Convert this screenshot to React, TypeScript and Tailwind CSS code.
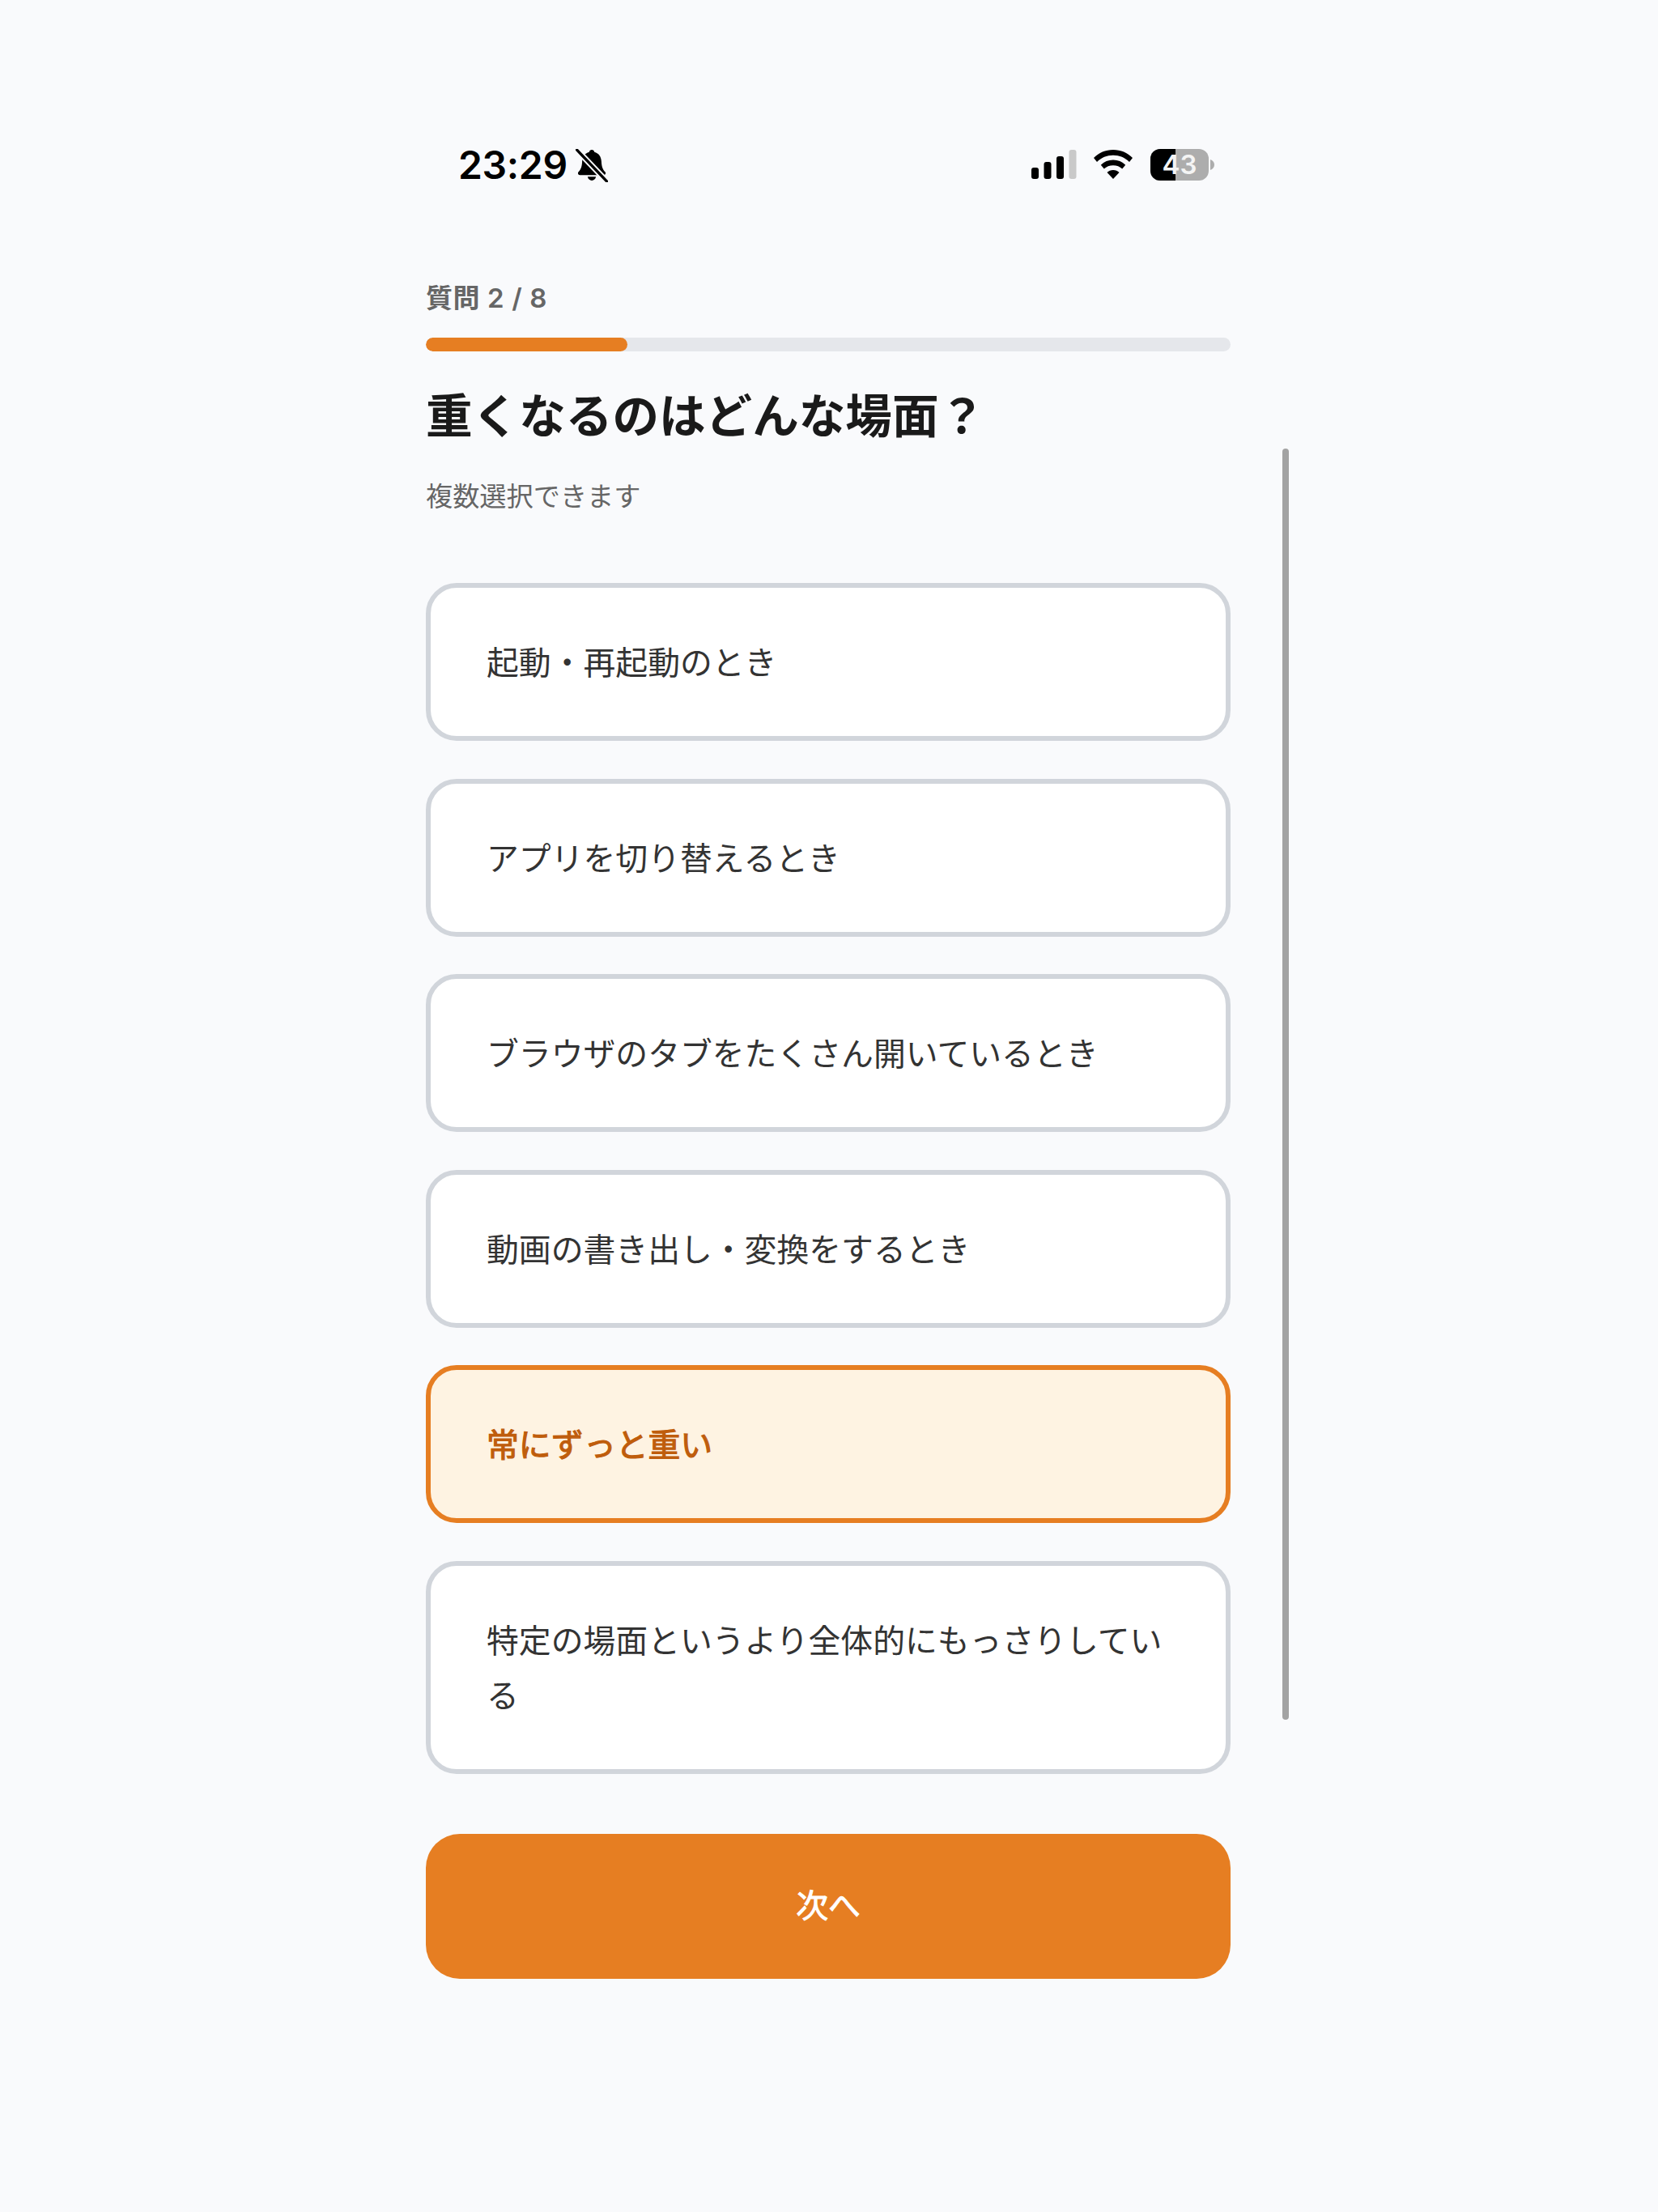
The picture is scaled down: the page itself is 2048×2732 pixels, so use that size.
const options = [
  "起動・再起動のとき",
  "アプリを切り替えるとき",
  "ブラウザのタブをたくさん開いているとき",
  "動画の書き出し・変換をするとき",
  "常にずっと重い",
  "特定の場面というより全体的にもっさりしている",
];

function BellSlash() {
  return (
    <svg width="40" height="41" viewBox="0 0 38 40" className="ml-[10px]">
      <path
        d="M19 1c1.600 0 2.800 1.100 3.100 2.600C27.600 5 30.300 9.400 30.600 15c.3 5.400 1 8.800 4.400 12.600 1.300 1.500.6 3.800-1.600 3.800H4.600c-2.200 0-2.900-2.300-1.600-3.800C6.400 23.800 7.100 20.400 7.400 15 7.700 9.400 10.400 5 15.900 3.600 16.200 2.100 17.400 1 19 1z"
        fill="#000"
      />
      <path d="M14 33.500h10c-.4 2.700-2.500 4.500-5 4.500s-4.600-1.800-5-4.500z" fill="#000" />
      <path d="M0 0L38 40" stroke="#f9fafc" strokeWidth="7" />
      <path d="M1 1L37 39" stroke="#000" strokeWidth="3.200" strokeLinecap="round" />
    </svg>
  );
}

function Signal() {
  return (
    <svg width="56" height="36" viewBox="0 0 56 36">
      <rect x="0" y="22" width="9" height="14" rx="3" fill="#000" />
      <rect x="15.500" y="15" width="9" height="21" rx="3" fill="#000" />
      <rect x="31" y="8" width="9" height="28" rx="3" fill="#000" />
      <rect x="46.500" y="0" width="9" height="36" rx="3" fill="#c9c9c9" />
    </svg>
  );
}

function Wifi() {
  return (
    <svg width="48" height="36" viewBox="0 0 48 36">
      <path d="M24 0C33.500 0 41.500 3.600 48 10l-4 5C38.500 9.700 31.800 6.800 24 6.800S9.500 9.700 4 15L0 10C6.500 3.600 14.500 0 24 0z" fill="#000" />
      <path d="M24 12.500c6 0 11 2.200 15.200 6.200l-4 4.800c-3-2.800-6.800-4.300-11.200-4.300s-8.200 1.500-11.200 4.300l-4-4.800C13 14.700 18 12.500 24 12.500z" fill="#000" />
      <path d="M24 25c3 0 5.500 1 7.500 2.900L24 36l-7.500-8.100C18.500 26 21 25 24 25z" fill="#000" />
    </svg>
  );
}

function Battery() {
  return (
    <div className="flex items-center">
      <div className="relative flex h-[39px] w-[72px] overflow-hidden rounded-[12px] bg-[#adadad]">
        <div className="h-full w-[31px] bg-black" />
        <span className="absolute inset-0 flex items-center justify-center text-[33px] font-semibold leading-none text-[#f4f4f4]">
          43
        </span>
      </div>
      <svg width="7" height="15" viewBox="0 0 7 15" className="ml-[1px]">
        <path d="M1 1c3 1 5 3.500 5 6.500S4 13 1 14z" fill="#adadad" />
      </svg>
    </div>
  );
}

export default function App() {
  return (
    <div
      className="relative h-[2732px] w-[2048px] overflow-hidden bg-[#f9fafc]"
      style={{ fontFamily: 'Inter, "Noto Sans CJK JP", sans-serif' }}
    >
      {/* status bar */}
      <div className="flex items-center justify-between pl-[566px] pr-[547px] pt-[180px]">
        <div className="flex items-center">
          <span className="text-[48px] font-semibold leading-[48px] tracking-[-0.3px] text-black">23:29</span>
          <BellSlash />
        </div>
        <div className="mb-[2px] flex items-center">
          <Signal />
          <div className="ml-[21px]">
            <Wifi />
          </div>
          <div className="ml-[22px]">
            <Battery />
          </div>
        </div>
      </div>

      <div className="ml-[526px] w-[994px] pt-[120px]">
        {/* progress */}
        <p className="text-[33px] font-semibold leading-[40px] tracking-[0.6px] text-[#666666]">質問 2 / 8</p>
        <div className="mt-[29px] h-[17px] w-full overflow-hidden rounded-full bg-[#e5e7eb]">
          <div className="h-full w-1/4 rounded-full bg-[#e67e22]" />
        </div>

        <h1 className="mt-[44px] text-[57.600px] font-bold leading-[72px] text-[#1a1a1a]">重くなるのはどんな場面？</h1>
        <p className="mt-[41px] text-[33.200px] leading-[44px] text-[#666666]">複数選択できます</p>

        {/* options */}
        <div className="mt-[85px] flex flex-col gap-[46.500px]">
          {options.map((label, i) => (
            <button
              key={label}
              className={
                i === 4
                  ? "rounded-[38px] border-[6px] border-[#e67e22] bg-[#fef3e2] px-[69px] pt-[59px] pb-[56px] text-left text-[39.850px] leading-[68px] text-[#bf5d0c] [-webkit-text-stroke:1.2px_#bf5d0c]"
                  : "rounded-[38px] border-[6px] border-[#d1d5db] bg-white px-[69px] pt-[59px] pb-[56px] text-left text-[39.850px] leading-[68px] text-[#333333]"
              }
            >
              {label}
            </button>
          ))}
        </div>

        <button className="mt-[74.500px] h-[178.500px] w-full rounded-[42px] bg-[#e67e22] text-[39.850px] text-white [-webkit-text-stroke:1px_#ffffff]">
          次へ
        </button>
      </div>

      {/* scrollbar overlay */}
      <div className="absolute left-[1584px] top-[554px] h-[1570px] w-[8px] rounded-full bg-[#a3a3a3]" />
    </div>
  );
}
